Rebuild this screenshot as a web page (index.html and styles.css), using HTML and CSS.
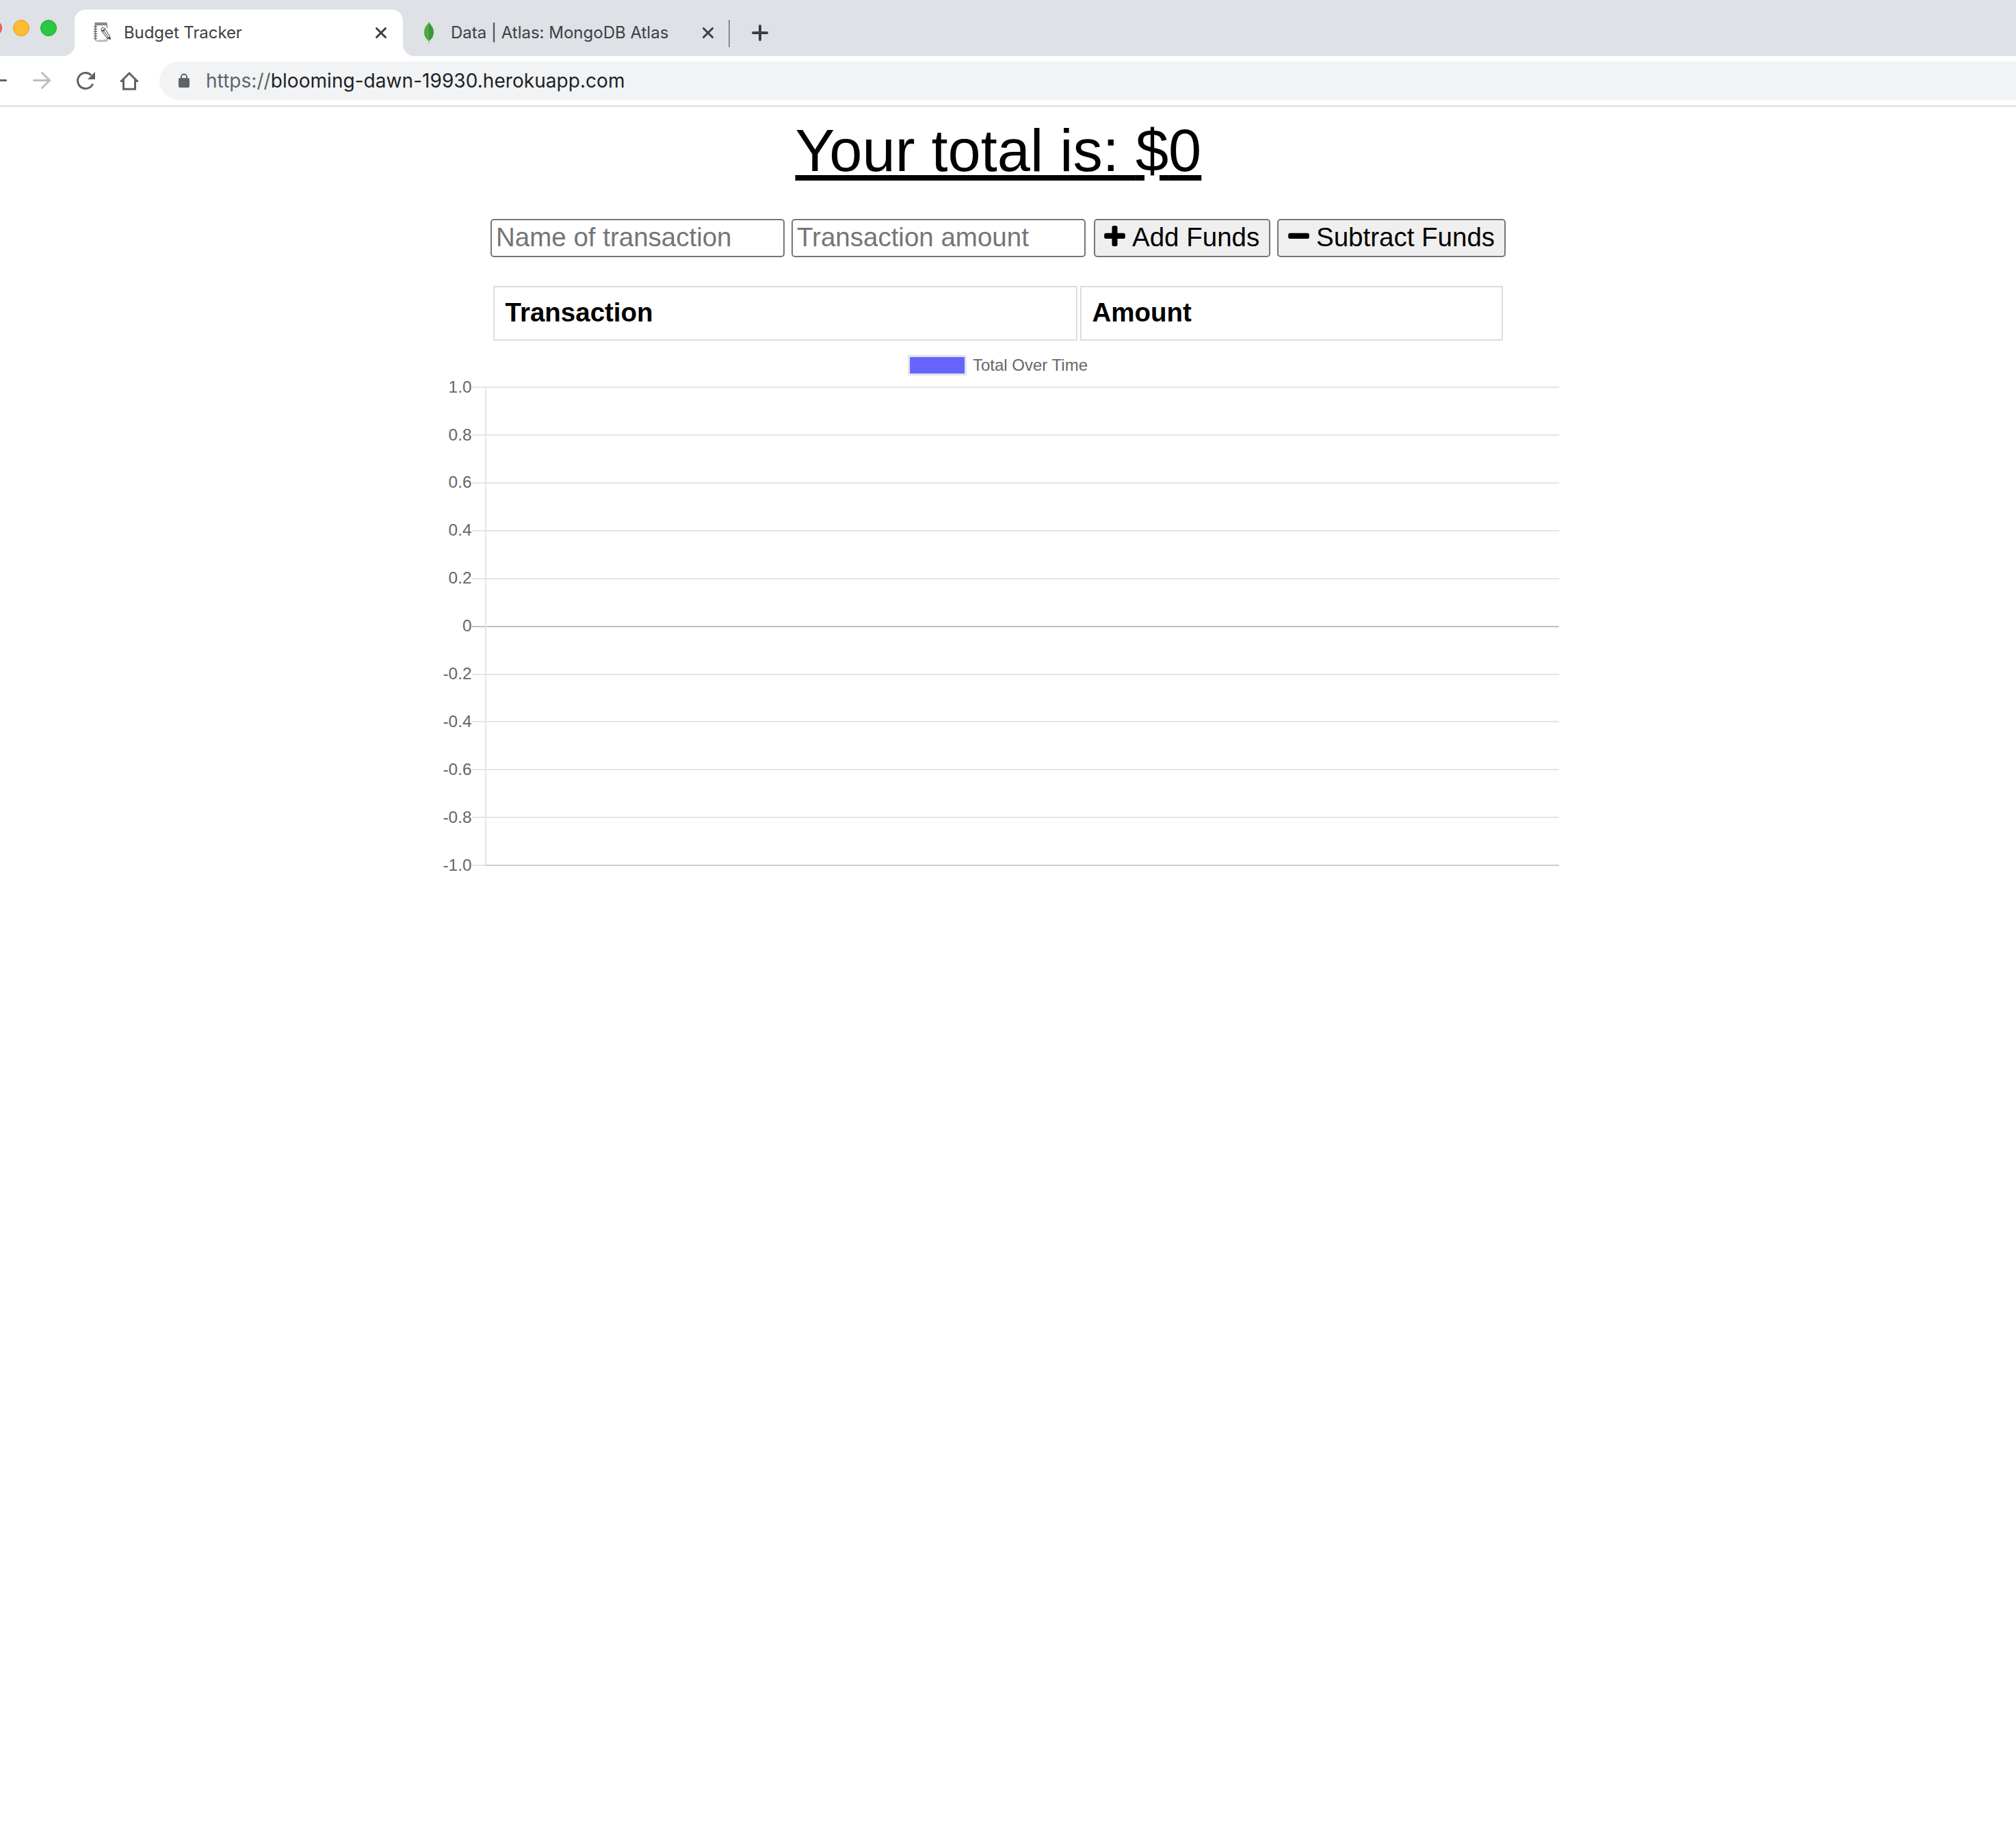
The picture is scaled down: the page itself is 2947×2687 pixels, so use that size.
FILE: index.html
```html
<!DOCTYPE html>
<html lang="en">
<head>
<meta charset="utf-8">
<title>Budget Tracker</title>
<link rel="stylesheet" href="styles.css">
</head>
<body>
<header class="browser">
  <div class="tab-strip">
    <svg class="lights" width="84" height="26" viewBox="0 0 84 26">
      <circle cx="-9" cy="13" r="11.5" fill="#fd5f57" stroke="#e2463f"/>
      <circle cx="31" cy="13" r="11.5" fill="#febc2e" stroke="#dfa023"/>
      <circle cx="71" cy="13" r="11.5" fill="#28c840" stroke="#1aab29"/>
    </svg>
    <div class="tab tab-active">
      <svg class="note-icon" width="28" height="30" viewBox="0 0 28 30" fill="none" stroke="#666" stroke-width="1">
        <path d="M3 1.500h17v3H3z" fill="#999"/>
        <path d="M3.500 4v22.500q0 1.500 2 1.500h14q1.500 0 1-2M20.500 4v5M20.500 23v3"/>
        <path d="M1 7h5M1 10.500h5M1 14h5M1 17.500h5M1 21h5M1 24.500h5" stroke-width="1.600"/>
        <path d="M12.500 13q-1.500-3.500 1-4.500 2-1 3.500 1l7.500 11.500.5 4.500-4.500-2zM12.500 13q3 0 4.500-3.500M14.500 11.500l8 11M13.500 15l4-3.500" stroke="#333"/>
        <path d="M21.500 23l3.500 3v-4z" fill="#222"/>
        <path d="M9 27h5M15 26h4" stroke="#aaa"/>
      </svg>
      <span class="tab-title title-one">Budget Tracker</span>
      <svg class="close" width="16" height="16" viewBox="0 0 16 16"><path d="M1.500 1.500l13 13M14.500 1.500l-13 13"/></svg>
    </div>
    <div class="tab tab-idle">
      <svg class="leaf" width="16" height="32" viewBox="0 0 16 32">
        <path d="M7.300 26h1.400l-.3 6h-.8z" fill="#b8a78f"/>
        <path d="M8 0C9 3 15 7 15 15c0 6-3 10-7 13z" fill="#3f9437"/>
        <path d="M8 0C7 3 1 7 1 15c0 6 3 10 7 13z" fill="#4faa41"/>
      </svg>
      <span class="tab-title title-two">Data | Atlas: MongoDB Atlas</span>
      <svg class="close" width="16" height="16" viewBox="0 0 16 16"><path d="M1.500 1.500l13 13M14.500 1.500l-13 13"/></svg>
    </div>
    <svg class="new-tab" width="24" height="24" viewBox="0 0 24 24"><path d="M12 2v20M2 12h20"/></svg>
  </div>
  <div class="toolbar">
    <svg class="nav-icons" width="212" height="30" viewBox="0 0 212 30" fill="none" stroke="#5f6368" stroke-width="3">
      <path d="M-14 14.500H8.700" stroke-linecap="round"/>
      <path d="M49.500 14.500H72M61.500 3.500L72.500 14.500 61.500 25.500" stroke="#bdbdbd" stroke-linecap="round"/>
      <path d="M135.700 19.500a11.500 11.500 0 1 1-2.400-12.600" stroke-width="3"/>
      <path d="M139 2v11h-11z" fill="#5f6368" stroke="none"/>
      <path d="M177.500 15.500L189 4l11.500 11.500" stroke-width="3"/>
      <path d="M180.500 13.500v13.700h17V13.500"/>
      <path d="M176 15.500h5M197 15.500h5"/>
    </svg>
    <div class="address">
      <svg class="lock" width="16" height="22" viewBox="0 0 16 22"><path d="M4 9V5.500a4 4 0 0 1 8 0V9" fill="none" stroke="#5f6368" stroke-width="2"/><rect y="7" width="16" height="14" rx="2" fill="#5f6368"/></svg>
      <span class="url"><span class="scheme">https://</span>blooming-dawn-19930.herokuapp.com</span>
    </div>
  </div>
</header>
<main class="wrapper">
  <h1 class="total"><span class="line">Your total is: </span><span class="currency">$</span><span class="line">0</span></h1>
  <div class="form">
    <input class="field" type="text" placeholder="Name of transaction">
    <input class="field" type="text" placeholder="Transaction amount">
    <button class="btn btn-add"><svg width="31" height="30" viewBox="0 0 31 30"><path d="M14 0h3q2.500 0 2.500 2.500v8.200h8.800q2.500 0 2.500 2.500v3.300q0 2.500-2.500 2.500h-8.800v8.500q0 2.500-2.500 2.500h-3q-2.500 0-2.500-2.500V19H2.700Q.2 19 .2 16.500v-3.300q0-2.500 2.500-2.500h8.800V2.500Q11.500 0 14 0z"/></svg>Add Funds</button>
    <button class="btn btn-sub"><svg width="31" height="30" viewBox="0 0 31 30"><rect x=".2" y="10.700" width="30.600" height="8.300" rx="2.500"/></svg>Subtract Funds</button>
  </div>
  <div class="table">
    <div class="cell">Transaction</div>
    <div class="cell">Amount</div>
  </div>
  <svg class="chart" width="1660" height="780" viewBox="640 500 1660 780">
    <rect x="1328.500" y="520.500" width="83" height="27" fill="#66f" stroke="#e5e5e5" stroke-width="3"/>
    <text x="1422" y="542" textLength="168">Total Over Time</text>
    <g class="grid">
      <path d="M690 566H2279M690 636H2279M690 706H2279M690 776H2279M690 846H2279M690 986H2279M690 1055H2279M690 1125H2279M690 1195H2279M690 1265H709"/>
      <path class="zero" d="M690 916H2279"/>
      <path d="M710 567V1264"/>
      <path class="base" d="M709 1265H2279"/>
    </g>
    <g class="ticks">
      <text x="689.500" y="574">1.0</text><text x="689.500" y="644">0.8</text><text x="689.500" y="713">0.6</text>
      <text x="689.500" y="783">0.4</text><text x="689.500" y="853">0.2</text><text x="689.500" y="923">0</text>
      <text x="689.500" y="993">-0.2</text><text x="689.500" y="1063">-0.4</text><text x="689.500" y="1133">-0.6</text>
      <text x="689.500" y="1203">-0.8</text><text x="689.500" y="1273">-1.0</text>
    </g>
  </svg>
</main>
</body>
</html>
```
FILE: styles.css
```css
* { box-sizing: border-box; }
body {
  margin: 0;
  background: #fff;
  color: #000;
  font-family: "Liberation Sans", Arial, sans-serif;
  overflow: hidden;
}
svg { display: block; flex: none; }
.browser { font-family: Inter, sans-serif; }
.tab-strip {
  display: flex;
  height: 82px;
  padding-top: 14px;
  background: #dee1e6;
}
.lights { margin: 14px 25px 0 0; }
.tab {
  display: flex;
  align-items: center;
  height: 68px;
}
.tab-active {
  position: relative;
  width: 480px;
  padding: 0 24px 0 27px;
  background: #fff;
  border-radius: 16px 16px 0 0;
}
.tab-active::before, .tab-active::after {
  content: "";
  position: absolute;
  bottom: 0;
  width: 16px;
  height: 16px;
}
.tab-active::before {
  left: -16px;
  background: radial-gradient(circle at 0 0, transparent 15.5px, #fff 16px);
}
.tab-active::after {
  right: -16px;
  background: radial-gradient(circle at 100% 0, transparent 15.5px, #fff 16px);
}
.tab-title {
  font-size: 24px;
  line-height: 32px;
  color: #3c4043;
  white-space: nowrap;
}
.note-icon { margin-bottom: 2px; }
.title-one { margin-left: 17px; letter-spacing: -.08px; }
.title-two { margin-left: 24px; }
.close {
  margin-left: auto;
  fill: none;
  stroke: #3c4043;
  stroke-width: 3;
  stroke-linecap: round;
}
.tab-idle {
  position: relative;
  width: 478px;
  padding: 0 24px 0 30px;
}
.tab-idle::after {
  content: "";
  position: absolute;
  right: 0;
  top: 15px;
  width: 2px;
  height: 40px;
  background: #878b90;
}
.new-tab {
  margin: 22px 0 0 32px;
  fill: none;
  stroke: #3c4043;
  stroke-width: 4;
  stroke-linecap: round;
}
.toolbar {
  display: flex;
  height: 74px;
  padding-top: 8px;
  border-bottom: 2px solid #dadce0;
  background: #fff;
}
.nav-icons { margin-top: 13px; }
.address {
  display: flex;
  align-items: center;
  flex: 1;
  height: 56px;
  margin-left: 21px;
  padding-left: 28px;
  border-radius: 28px 0 0 28px;
  background: #f1f3f4;
}
.url {
  margin-left: 24px;
  font-size: 28px;
  line-height: 36px;
  letter-spacing: .05px;
  color: #202124;
  white-space: nowrap;
}
.scheme { color: #5f6368; }
.wrapper { width: 1660px; margin-left: 640px; }
.total {
  margin: 0;
  padding-top: 12px;
  height: 164px;
  padding-left: 522.500px;
  font-size: 86.600px;
  line-height: 104px;
  font-weight: 400;
  white-space: nowrap;
}
.line {
  text-decoration: underline;
  text-decoration-thickness: 8px;
  text-underline-offset: 6px;
}
/* the rule breaks around the foot of the dollar sign */
.currency {
  background: linear-gradient(to right, #000 13px, transparent 13px 35px, #000 35px) 0 84px / 100% 8px no-repeat;
}
.form {
  display: flex;
  gap: 10px;
  padding-left: 77px;
}
.field {
  width: 430px;
  height: 56px;
  margin: 0;
  padding: 0 4px 2px 6px;
  border: 2px solid #767676;
  border-radius: 5px;
  background: #fff;
  font: 38.500px "Liberation Sans", Arial, sans-serif;
}
.field::placeholder { color: #757575; opacity: 1; }
.btn {
  display: flex;
  align-items: center;
  height: 56px;
  margin: 0;
  padding: 0 0 2px 13px;
  border: 2px solid #767676;
  border-radius: 5px;
  background: #efefef;
  color: #000;
  font: 38.500px "Liberation Sans", Arial, sans-serif;
  white-space: nowrap;
}
.btn svg { margin: 0 10px 4px 0; }
.btn-add { width: 258px; margin-left: 2px; }
.btn-sub { width: 334px; padding-left: 14px; }
.table {
  display: grid;
  grid-template-columns: 854px 618px;
  gap: 4px;
  padding: 42px 0 0 81px;
}
.cell {
  height: 80px;
  padding: 0 15.500px;
  border: 2px solid #ddd;
  font-size: 38.500px;
  font-weight: 700;
  line-height: 73px;
}
.chart { margin-top: 2px; }
.chart text { font-size: 24px; fill: #666; }
.chart .ticks text { font-size: 24.400px; }
.ticks { text-anchor: end; }
.grid { fill: none; stroke: #e5e5e5; stroke-width: 2; }
.grid .zero { stroke: #bfbfbf; }
.grid .base { stroke: #cdcdcd; }
```
